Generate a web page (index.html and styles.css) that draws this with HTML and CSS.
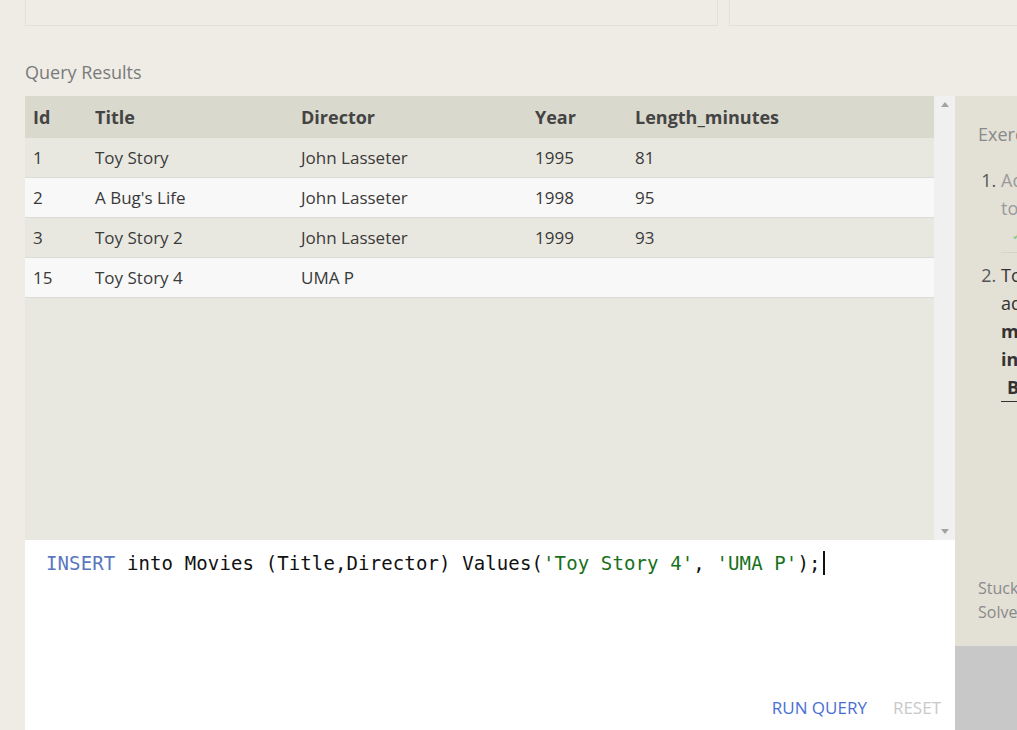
FILE: index.html
```html
<!DOCTYPE html>
<html>
<head>
<meta charset="utf-8">
<link rel="stylesheet" href="styles.css">
</head>
<body>
<div class="top">
  <div class="top-box left"></div>
  <div class="top-box right"></div>
</div>
<div class="main">
  <div class="left-col">
    <div class="results-title">Query Results</div>
    <div class="results">
      <div class="table-wrap">
        <table class="grid">
          <thead>
            <tr><th class="c-id">Id</th><th class="c-title">Title</th><th class="c-dir">Director</th><th class="c-year">Year</th><th>Length_minutes</th></tr>
          </thead>
          <tbody>
            <tr><td>1</td><td>Toy Story</td><td>John Lasseter</td><td>1995</td><td>81</td></tr>
            <tr><td>2</td><td>A Bug's Life</td><td>John Lasseter</td><td>1998</td><td>95</td></tr>
            <tr><td>3</td><td>Toy Story 2</td><td>John Lasseter</td><td>1999</td><td>93</td></tr>
            <tr><td>15</td><td>Toy Story 4</td><td>UMA P</td><td></td><td></td></tr>
          </tbody>
        </table>
      </div>
      <div class="scrollbar">
        <span class="arrow up"></span>
        <span class="arrow down"></span>
      </div>
    </div>
    <div class="editor">
      <div class="code"><span class="kw">INSERT</span> into Movies (Title,Director) Values(<span class="str">'Toy Story 4'</span>, <span class="str">'UMA P'</span>);<span class="caret"></span></div>
      <div class="actions">
        <span class="btn run">RUN QUERY</span>
        <span class="btn reset">RESET</span>
      </div>
    </div>
  </div>
  <div class="side">
    <div class="side-body">
      <div class="side-title">Exercise</div>
      <ol class="tasks">
        <li class="done">Add the movie <span>to</span>
          <div class="check">✓</div>
        </li>
        <li>Toy Story 4 <span>add</span>
          <div class="bold">m</div>
          <div class="bold">in</div>
          <div class="hint">B</div>
        </li>
      </ol>
      <div class="stuck">Stuck?<br>Solve</div>
    </div>
    <div class="side-foot"></div>
  </div>
</div>
</body>
</html>
```

FILE: styles.css
```css
html, body {
  margin: 0;
  padding: 0;
  background: #efece5;
  font-family: "Open Sans", "Noto Sans", sans-serif;
  overflow: hidden;
}

.top {
  display: flex;
  height: 26px;
  padding-left: 25px;
  gap: 11px;
}
.top-box {
  border: 1px solid #e3e0d8;
  border-top: none;
  box-sizing: border-box;
  height: 26px;
}
.top-box.left { width: 693px; }
.top-box.right { flex: 1; border-right: none; }

.main {
  display: flex;
  padding-left: 25px;
}
.left-col {
  width: 930px;
  flex-shrink: 0;
  display: flex;
  flex-direction: column;
}
.results-title {
  height: 70px;
  box-sizing: border-box;
  padding-top: 34px;
  font-size: 18px;
  color: #7a7a7a;
  line-height: 24px;
}

.results {
  display: flex;
  height: 444px;
  background: #e9e8e0;
}
.table-wrap {
  flex: 1;
}
.grid {
  width: 100%;
  border-collapse: collapse;
  font-size: 17px;
  color: #3a3a3a;
}
.grid th {
  background: #dad9ce;
  height: 42px;
  text-align: left;
  font-weight: 700;
  font-size: 18px;
  color: #444;
  padding: 0 0 0 8px;
}
.grid td {
  height: 39px;
  padding: 0 0 0 8px;
  border-bottom: 1px solid #dcdcd6;
}
.grid tbody tr:nth-child(odd) { background: #e9e8e0; }
.grid tbody tr:nth-child(even) { background: #f8f8f8; }
.grid .c-id { width: 54px; }
.grid .c-title { width: 198px; }
.grid .c-dir { width: 226px; }
.grid .c-year { width: 92px; }

.scrollbar {
  width: 21px;
  background: #f0f0f0;
  display: flex;
  flex-direction: column;
  justify-content: space-between;
  align-items: center;
  padding: 6px 0;
  box-sizing: border-box;
}
.arrow {
  width: 0;
  height: 0;
  border-left: 4px solid transparent;
  border-right: 4px solid transparent;
}
.arrow.up { border-bottom: 5px solid #a3a3a3; }
.arrow.down { border-top: 5px solid #a3a3a3; }

.editor {
  background: #fff;
  height: 190px;
  display: flex;
  flex-direction: column;
  justify-content: space-between;
}
.code {
  font-family: "DejaVu Sans Mono", "Liberation Mono", monospace;
  font-size: 19px;
  letter-spacing: 0.12px;
  padding: 11px 0 0 21px;
  line-height: 24px;
  color: #111;
  white-space: pre;
  display: flex;
  align-items: center;
}
.kw { color: #5a77bf; }
.str { color: #17711a; }
.caret {
  display: inline-block;
  width: 2px;
  height: 24px;
  background: #111;
  margin-left: 2px;
}
.actions {
  display: flex;
  justify-content: flex-end;
  gap: 26px;
  padding: 0 14px 10px 0;
  font-size: 17px;
  line-height: 24px;
}
.run { color: #4a6fd4; }
.reset { color: #c9c9c9; }

.side {
  flex: 1;
  min-width: 0;
  display: flex;
  flex-direction: column;
  height: 634px;
  margin-top: 70px;
}
.side-body {
  background: #e3e0d6;
  height: 550px;
  padding: 26px 0 0 23px;
  box-sizing: border-box;
  white-space: nowrap;
  overflow: hidden;
}
.side-foot {
  flex: 1;
  background: #c8c8c8;
}
.side-title {
  font-size: 18px;
  color: #8a8a8a;
  line-height: 24px;
}
.tasks {
  margin: 20px 0 0;
  padding-left: 23px;
  font-size: 18px;
  line-height: 28px;
  color: #333;
}
.tasks li::marker { color: #555; }
.tasks li span { display: block; }
.tasks li.done { color: #9a9a9a; }
.check {
  color: #7cc87c;
  font-size: 12px;
  padding-left: 11px;
  border-bottom: 1px solid #d6d3ca;
  padding-bottom: 2px;
}
.bold { font-weight: 700; color: #333; }
.hint {
  font-weight: 700;
  padding-left: 6px;
  border-bottom: 1px solid #333;
  width: 40px;
}
.tasks li + li { margin-top: 8px; }
.stuck {
  margin-top: 174px;
  font-size: 16px;
  line-height: 24px;
  color: #8a8a8a;
}
```
